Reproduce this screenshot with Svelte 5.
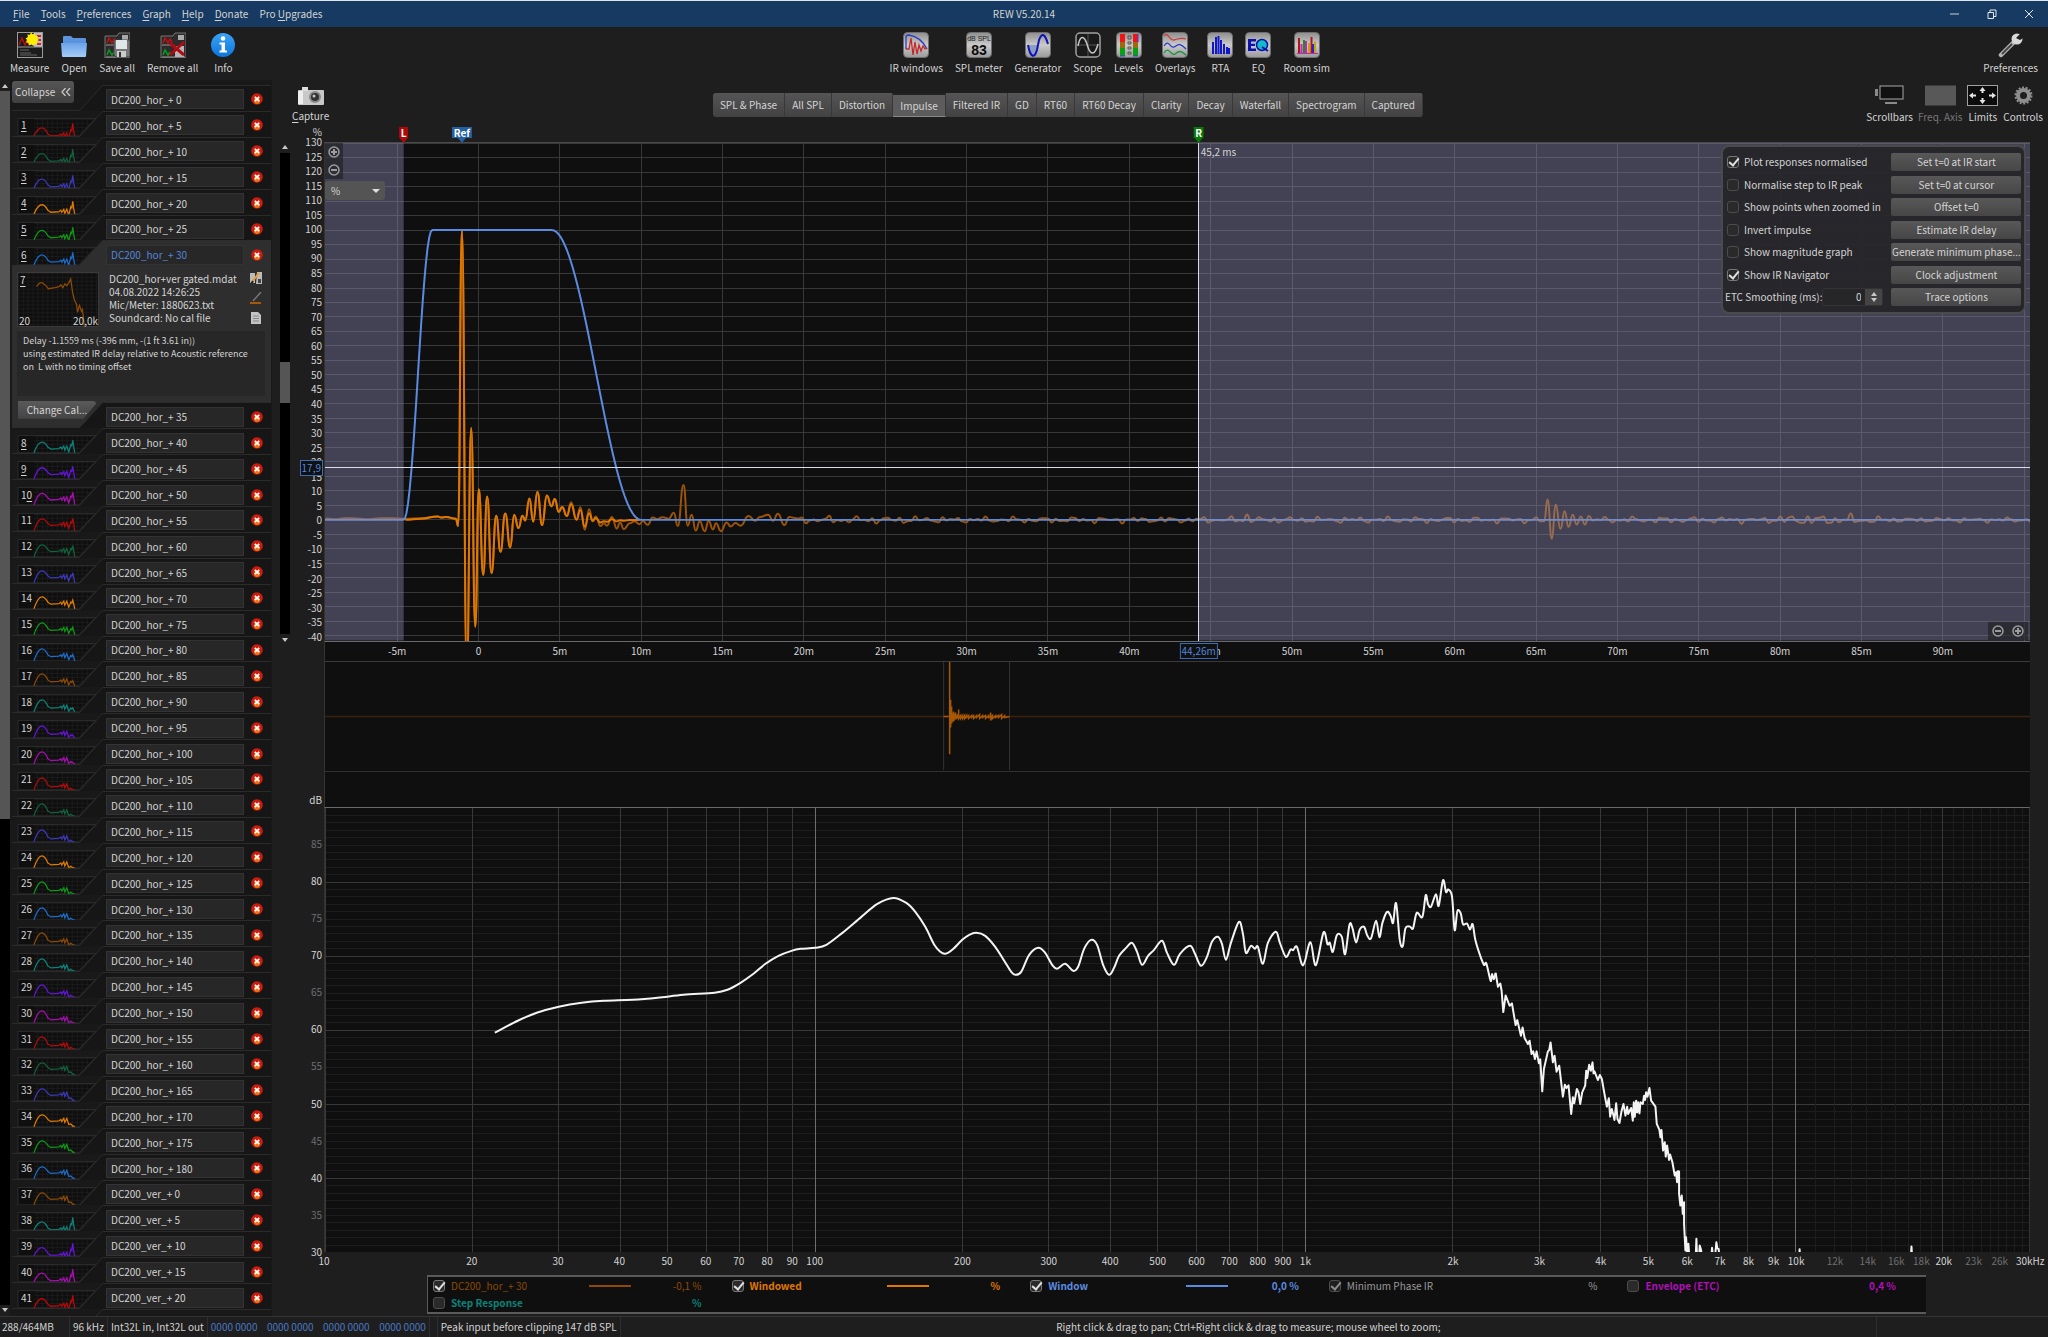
<script lang="ts">
  type Point = [number, number];

  const menus = [
    ['', 'F', 'ile'], ['', 'T', 'ools'], ['', 'P', 'references'], ['', 'G', 'raph'],
    ['', 'H', 'elp'], ['', 'D', 'onate'], ['Pro ', 'U', 'pgrades'],
  ];
  const fileTools = ['Measure', 'Open', 'Save all', 'Remove all', 'Info'];
  const viewTools = ['IR windows', 'SPL meter', 'Generator', 'Scope', 'Levels', 'Overlays', 'RTA', 'EQ', 'Room sim'];
  const graphTools = ['Scrollbars', 'Freq. Axis', 'Limits', 'Controls'];
  const tabs = [
    'SPL & Phase', 'All SPL', 'Distortion', 'Impulse', 'Filtered IR', 'GD', 'RT60',
    'RT60 Decay', 'Clarity', 'Decay', 'Waterfall', 'Spectrogram', 'Captured',
  ];
  let activeTab = $state('Impulse');

  // Measurement list
  const SELECTED = 6;
  const traceColors = ['#b40a0a', '#11623c', '#3c38ba', '#e07a00', '#0c9a14', '#1c6ccc', '#8c4a04', '#0c8278', '#6414dc', '#aa0cb4'];
  const measurements = Array.from({ length: 42 }, (_, i) =>
    i <= 36 ? `DC200_hor_+ ${i * 5}` : `DC200_ver_+ ${(i - 37) * 5}`
  );

  function thumbPath(n: number): string {
    const k = n >= 38 ? n - 38 : n - 1;
    const t = Math.min(k, 20) / 20;
    let mid = t < 0.5 ? 25 - 11 * t : 19.5 + 5 * (t - 0.5);
    if (k > 30) mid = 19.5;
    const peak = t < 0.5 ? 12.5 : 12.5 + (t - 0.5) * 24;
    const hump = 17 - 4 * Math.min(1, t * 2);
    const top = (peak + mid) / 2;
    return `M22 25 Q26 ${hump} 30 ${hump} Q33 ${hump} 36 ${mid - 2} L39 ${mid} L47 ${mid - 0.5} L49 ${mid - 2} L50 ${mid}
      L52 ${mid - 3} L53 ${mid + 1} L55 ${mid - 3} L57 ${mid + 3} L59 ${top} L60 ${top + 1} L61 ${peak} L62 ${top + 2} L63 25`;
  }

  // Impulse graph: 1706 x 499 units, 0 ms at 153.6
  const IR_W = 1706;
  const IR_H = 499;
  const msX = (ms: number) => 153.6 + 16.28 * ms;
  const pctY = (v: number) => 378 - 2.907 * v;

  const response: Point[] = [
    [-9.4, 0.5], [-8.8, 0.2], [-8.2, 0.6], [-7.5, 0.5], [-6.8, 0.2], [-6, 0.6], [-5.4, 0.6], [-4.5, 0.3],
    [-3.5, 0.6], [-2.5, 1.2], [-2.3, 0.8], [-2, 1], [-1.4, 0.4], [-1.25, -2.1], [-1.02, 100], [-0.72, -52], [-0.45, 31.7],
    [-0.2, -36.9], [0.02, 10.6], [0.29, -19], [0.53, 8.1], [0.8, -18.4], [1.09, 1.4], [1.35, -11], [1.64, 2.2],
    [1.95, -9.5], [2.19, 1.7], [2.46, -2.8], [2.7, 1.4], [2.87, -0.2], [3.13, 7.4], [3.36, -0.6], [3.62, 9.6],
    [3.91, -1.8], [4.2, 8.4], [4.48, 4.7], [4.69, 7.2], [4.93, 2.8], [5.14, 4.5], [5.43, 1.4], [5.69, 6.1],
    [6.02, 0.1], [6.26, 4.4], [6.53, -3.4], [6.8, 3.7], [7.02, -0.5], [7.2, 1.2], [7.5, -2.1], [7.7, -1.2], [7.9, -2],
    [8.2, 1], [8.5, -3], [8.7, -0.9], [8.93, -3.2], [9.3, -1.2], [9.6, -0.5], [9.9, -1.5], [10.1, -0.4], [10.4, -1.7],
    [10.7, 0.8], [11, 0.3], [11.3, 0.9], [11.7, 0.4], [12, 2.5], [12.25, -2.1], [12.6, 12], [12.86, -2], [13.1, 1.8],
    [13.35, -3.7], [13.6, -0.5], [13.9, -3.9], [14.15, -0.3], [14.4, -3.3], [14.6, -1.2], [14.9, -3.9], [15.25, -0.9],
    [15.5, -2.3], [15.8, -1.1], [16.1, -2], [16.6, 1.3], [17, -0.3], [17.3, 1], [17.8, 1.8], [18.1, -0.3],
    [18.4, 2.1], [18.8, -1.8], [19.1, 1],
  ];
  const reflection: Point[] = [
    [65.5, -0.5], [65.7, 7], [65.97, -6.5], [66.2, 5.3], [66.5, -3.1], [66.75, 3], [67, -2.4], [67.25, 1.8],
    [67.5, -1.6], [67.75, 1.2], [68, -1.6], [68.25, 1.3],
  ];
  const ripple = (t: number) => 0.5 * Math.sin(t * 7.1) + 0.45 * Math.sin(t * 11.7 + 1) + 0.4 * Math.sin(t * 3.3);

  function tail(from: number, to: number): Point[] {
    const out: Point[] = [];
    for (let t = from; t < to; t += 0.24) {
      const gain = t < 28 ? 1.2 : t > 80 && t < 86 ? 1.7 : t > 87 ? 0.8 : 1;
      out.push([t, ripple(t) * gain + (Math.abs(t - 47.2) < 0.15 ? 1.6 : 0)]);
    }
    return out;
  }
  const fullResponse = [...response, ...tail(19.4, 65.3), ...reflection, ...tail(68.5, 95.5)];

  function windowGain(t: number): number {
    if (t <= -4.6 || t >= 10) return 0;
    if (t < -2.85) return 0.5 - 0.5 * Math.cos((Math.PI * (t + 4.6)) / 1.75);
    if (t < 4.5) return 1;
    return 0.5 + 0.5 * Math.cos((Math.PI * (t - 4.5)) / 5.5);
  }

  // Joins the turning points with flat tangents
  function smooth(points: Point[]): string {
    return points
      .map(([t, v], i) => {
        const x = msX(t);
        const y = pctY(v);
        if (i === 0) return `M${x} ${y}`;
        const px = msX(points[i - 1][0]);
        const mx = (px + x) / 2;
        return `C${mx} ${pctY(points[i - 1][1])} ${mx} ${y} ${x} ${y}`;
      })
      .join('');
  }
  const responsePath = smooth(fullResponse);
  const windowedPath = smooth(
    response.filter(([t]) => t >= -4.6 && t <= 10).map(([t, v]): Point => [t, v * windowGain(t)])
  );
  const windowPath =
    'M' + Array.from({ length: 1049 }, (_, i) => -9.43 + i / 10).map((t) => `${msX(t)} ${pctY(100 * windowGain(t))}`).join('L');

  const msTicks = Array.from({ length: 21 }, (_, i) => -5 + i * 5);
  const pctTicks = Array.from({ length: 35 }, (_, i) => 130 - i * 5);

  // Spectrum graph: 1706 x 445 units, 10 Hz to 30 kHz, 90 dB to 30 dB
  const SP_W = 1706;
  const SP_H = 445;
  const hzX = (hz: number) => 490.7 * Math.log10(hz / 10);
  const dbY = (db: number) => (90 - db) * 7.417;

  const low: Point[] = [
    [170, 225], [193, 213], [212, 205], [234, 199], [257, 195], [279, 193], [308, 192], [333, 190], [359, 187],
    [390, 185], [403, 182], [416, 175], [429, 166], [441, 156], [454, 148], [467, 143], [476, 141], [491, 140], [502, 137],
    [518, 125], [537, 109], [553, 96], [569, 90], [582, 95], [591, 104], [601, 119], [610, 137], [616, 144], [621, 146],
    [628, 142], [638, 132], [645, 127], [652, 125], [661, 128], [671, 139], [680, 153], [687, 164], [691, 167], [697, 164],
    [705, 147], [714, 140], [721, 145], [728, 157], [733, 161], [741, 156], [749, 163], [754, 159], [760, 141], [767, 132],
    [773, 137], [779, 157], [785, 167], [790, 160], [795, 148], [802, 140], [808, 135], [813, 144], [818, 157], [824, 148],
    [830, 142], [838, 133], [843, 145], [850, 157], [856, 146], [866, 138], [871, 146], [877, 158], [883, 149], [888, 134],
    [894, 129], [898, 136], [902, 152], [907, 135], [915, 114], [919, 126], [922, 145], [927, 138], [931, 141], [934, 139],
    [939, 156], [944, 135], [952, 124], [956, 135],
  ];
  // Upper band, stored at three times the resolution
  const high: Point[] = [
    [18, 348], [32, 326], [40, 328], [51, 318], [66, 370], [75, 362], [92, 304], [108, 373], [131, 275], [143, 310],
    [150, 306], [159, 333], [171, 283], [186, 288], [196, 340], [209, 252], [218, 262], [229, 305], [240, 266], [253, 258],
    [263, 285], [274, 292], [289, 240], [299, 289], [308, 246], [322, 213], [333, 226], [340, 246], [349, 187], [360, 297],
    [369, 316], [377, 263], [390, 257], [400, 262], [411, 216], [428, 228], [438, 163], [445, 190], [454, 197], [469, 160],
    [477, 195], [490, 118], [499, 153], [506, 146], [517, 167], [525, 268], [533, 211], [543, 217], [550, 250], [562, 248],
    [571, 266], [579, 250], [587, 297], [600, 340], [613, 372], [620, 368], [633, 420], [637, 400], [643, 415], [648, 396],
    [655, 438], [662, 428], [666, 450], [671, 514], [678, 464], [690, 495], [697, 488], [708, 553], [713, 538], [724, 585],
    [729, 560], [735, 592], [745, 610], [750, 600], [756, 640], [761, 632], [766, 655], [771, 632], [778, 668], [782, 656],
    [788, 752], [793, 685], [805, 632], [809, 628], [813, 605], [820, 665], [825, 645], [831, 693], [839, 675], [850, 768],
    [856, 732], [861, 742], [867, 734], [875, 820], [880, 770], [884, 788], [892, 745], [897, 755], [902, 790], [908, 755],
    [917, 735], [920, 690], [923, 712], [929, 672], [934, 690], [939, 665], [942, 698], [945, 692], [955, 718], [961, 703],
    [967, 715], [975, 760], [982, 798], [988, 773], [992, 828], [997, 805], [1002, 825], [1005, 838], [1010, 788],
    [1014, 835], [1020, 847], [1026, 812], [1032, 790], [1038, 825], [1043, 798], [1046, 820], [1050, 812], [1055, 802],
    [1060, 840], [1063, 785], [1066, 828], [1070, 780], [1073, 815], [1076, 785], [1080, 818], [1083, 785], [1090, 790],
    [1094, 765], [1097, 778], [1100, 755], [1104, 768], [1110, 742], [1115, 780], [1128, 798], [1132, 850], [1140, 868],
    [1143, 890], [1146, 868], [1151, 930], [1156, 905], [1159, 948], [1163, 915], [1169, 958], [1172, 942], [1179, 965],
    [1186, 1005], [1190, 995], [1193, 1025], [1195, 992], [1199, 993], [1199, 1060], [1203, 1095], [1207, 1065], [1210, 1120],
    [1214, 1085], [1214, 1150], [1218, 1230], [1220, 1190], [1224, 1250], [1227, 1210], [1230, 1250], [1249, 1250],
    [1251, 1195], [1253, 1250], [1259, 1250], [1261, 1215], [1265, 1228], [1268, 1250], [1296, 1250], [1298, 1222],
    [1301, 1250], [1307, 1250], [1311, 1205], [1314, 1224], [1318, 1226], [1320, 1250], [1560, 1250], [1561, 1226],
    [1562, 1250], [1895, 1250], [1897, 1218], [1899, 1250],
  ];
  function bend(points: Point[]): string {
    let d = `M${points[0].join(' ')}`;
    for (let i = 0; i < points.length - 1; i++) {
      const p0 = points[Math.max(i - 1, 0)];
      const p1 = points[i];
      const p2 = points[i + 1];
      const p3 = points[Math.min(i + 2, points.length - 1)];
      d += `C${p1[0] + (p2[0] - p0[0]) / 6} ${p1[1] + (p2[1] - p0[1]) / 6} ${p2[0] - (p3[0] - p1[0]) / 6} ${p2[1] - (p3[1] - p1[1]) / 6} ${p2[0]} ${p2[1]}`;
    }
    return d;
  }
  const upper = high.map(([x, y]): Point => [956 + x / 3, 33 + y / 3]);
  const lowPath = bend([...low, ...upper.slice(0, 60)]);
  const highPath = 'M' + upper.slice(59).map((p) => p.join(' ')).join('L');

  const hzLines = [10, 100, 1000, 10000].flatMap((d) => Array.from({ length: 9 }, (_, i) => d * (i + 1))).filter((f) => f <= 30000);
  const hzFine = Array.from({ length: 19 }, (_, i) => 11000 + i * 1000);
  const hzTicks = [...hzLines.slice(0, 28), 12000, 14000, 16000, 18000, 20000, 23000, 26000, 30000];
  const dimHz = [12000, 14000, 16000, 18000, 23000, 26000];
  const hzLabel = (f: number) => (f === 30000 ? '30kHz' : f >= 1000 ? `${f / 1000}k` : `${f}`);
  const dbLines = Array.from({ length: 60 }, (_, i) => 30 + i);
  const dbTicks = [85, 80, 75, 70, 65, 60, 55, 50, 45, 40, 35, 30];

  let options = $state([
    { label: 'Plot responses normalised', on: true, action: 'Set t=0 at IR start' },
    { label: 'Normalise step to IR peak', on: false, action: 'Set t=0 at cursor' },
    { label: 'Show points when zoomed in', on: false, action: 'Offset t=0' },
    { label: 'Invert impulse', on: false, action: 'Estimate IR delay' },
    { label: 'Show magnitude graph', on: false, action: 'Generate minimum phase...' },
    { label: 'Show IR Navigator', on: true, action: 'Clock adjustment' },
  ]);
  let smoothing = $state('0');

  let legend = $state([
    { name: 'DC200_hor_+ 30', color: '#8c4a04', on: true, line: true, value: '-0,1 %', bold: false },
    { name: 'Windowed', color: '#e07800', on: true, line: true, value: '%', bold: true },
    { name: 'Window', color: '#5b8be0', on: true, line: true, value: '0,0 %', bold: true },
    { name: 'Minimum Phase IR', color: '#9a9a9a', on: true, line: false, value: '%', bold: false },
    { name: 'Envelope (ETC)', color: '#b010b8', on: false, line: false, value: '0,4 %', bold: true },
    { name: 'Step Response', color: '#0c8278', on: false, line: false, value: '%', bold: true },
  ]);
</script>

{#snippet plate()}
  <rect x="0.5" y="0.5" width="25" height="25" rx="4" fill="url(#plate)" stroke="#6e6e6e" />
{/snippet}

{#snippet folderBase()}
  <path d="M1 4H13L15 1H26V26H1Z" fill="#2b2b2b" stroke="#777" />
  <path d="M2 13H14M2 25H25" stroke="#999" />
  <path d="M3 11L5 6L8 11L10 7L12 10" fill="none" stroke="#c01010" stroke-width="1.5" />
  <path d="M3 23L5 18L8 23L10 20" fill="none" stroke="#0a9a20" stroke-width="1.5" />
  <rect x="18" y="3" width="6" height="5" fill="#aaa" />
{/snippet}

{#snippet toolIcon(name: string)}
  <svg class="tool-icon" viewBox="0 0 26 26" aria-hidden="true">
    {#if name === 'Measure'}
      <rect x="0.5" y="0.5" width="25" height="25" fill="#1c1c1c" stroke="#9a9a9a" />
      <rect x="17" y="1" width="8" height="14" fill="#bdbdbd" />
      <path d="M20 4H24M20 8H24M20 12H24" stroke="#c22" stroke-width="2" />
      <path d="M1 15H25" stroke="#999" />
      <path d="M2 13L5 6L8 13L10 8L12 13" fill="none" stroke="#c01010" stroke-width="1.3" />
      <path d="M3 18H12M3 21H14M3 23H20" stroke="#666" />
      <path d="M14 0l1.500 2.200 2.500-.9.400 2.600 2.600.4-.9 2.300 1.900 1.400-2.300 1.600.6 2.400-2.600-.1-1.200 2-2-1.500-2.600 1-.4-2.500-2.600-.6 1.300-2.300-1.600-1.600 2.300-1.500-.5-2.300 2.600.1z" fill="#ffee00" />
    {:else if name === 'Open'}
      <path d="M2 5Q2 4 3 4H10L12 6H24Q25 6 25 7V14H2Z" fill="#5b93dc" />
      <path d="M0 11H26L25 24Q25 25 24 25H2Q1 25 1 24Z" fill="url(#folder)" />
    {:else if name === 'Save all'}
      {@render folderBase()}
      <path d="M10 8H26V25H12L10 23Z" fill="#777" stroke="#444" />
      <rect x="12" y="8" width="11" height="9" fill="#dfe6ea" />
      <rect x="13" y="19" width="9" height="6" fill="#ccc" />
      <rect x="15" y="20" width="2" height="5" fill="#333" />
    {:else if name === 'Remove all'}
      {@render folderBase()}
      <rect x="15" y="14" width="9" height="11" fill="#b5b5b5" />
      <path d="M10 11L24 23M24 10L10 23" stroke="#b00c14" stroke-width="3" />
    {:else if name === 'Info'}
      <circle cx="13" cy="13" r="12" fill="url(#info)" />
      <circle cx="13" cy="6.500" r="2.300" fill="#fff" />
      <path d="M9.500 10.500H15V18.500H17V20.500H9.500V18.500H11.500V12.500H9.500Z" fill="#fff" />
    {:else if name === 'IR windows'}
      {@render plate()}
      <path d="M3 17V5Q3 3 6 3Q18 5 24 17" fill="none" stroke="#2a3cc8" stroke-width="1.300" />
      <path d="M3 17H6L8 6L10 23L12 10L14 22L16 13L18 19L20 14L22 17L24 16" fill="none" stroke="#c42828" stroke-width="1.300" />
    {:else if name === 'SPL meter'}
      {@render plate()}
      <text x="13" y="9" text-anchor="middle" class="meter-unit">dB SPL</text>
      <text x="13" y="23" text-anchor="middle" class="meter-value">83</text>
    {:else if name === 'Generator'}
      {@render plate()}
      <path d="M3 13H13L12 18Q9 26 6 22Z" fill="#8e9cc4" />
      <path d="M3 13C5 24 9 28 12 18L14 8C17 0 20 2 23 12" fill="none" stroke="#0c14b4" stroke-width="2" />
    {:else if name === 'Scope'}
      <rect x="1" y="1" width="24" height="24" rx="4" fill="#1a1a1a" stroke="#a0a0a0" stroke-width="1.500" />
      <path d="M13 2V24M2 13H24" stroke="#555" />
      <path d="M3 14C5 3 9 3 12 12C15 24 20 24 23 12" fill="none" stroke="#c8c8c8" stroke-width="1.500" />
    {:else if name === 'Levels'}
      {@render plate()}
      <rect x="4" y="2" width="5" height="8" fill="#f01414" />
      <rect x="4" y="10" width="5" height="6" fill="#9a6a10" />
      <rect x="4" y="16" width="5" height="8" fill="#0aa014" />
      <rect x="17" y="2" width="5" height="8" fill="#f01414" />
      <rect x="17" y="10" width="5" height="6" fill="#9a6a10" />
      <rect x="17" y="16" width="5" height="8" fill="#0aa014" />
      <path d="M4 24H9M17 24H22M22 2V10" stroke="#3a3af0" />
      <path d="M12 4H15V7H12ZM12 10H15V12H12ZM12 15H15V17H12ZM12 20H15V22H12Z" fill="none" stroke="#555" />
    {:else if name === 'Overlays'}
      {@render plate()}
      <path d="M2 4C6 -1 7 9 12 8S18 5 24 7" fill="none" stroke="#d03838" stroke-width="1.300" />
      <path d="M2 14C7 6 8 17 12 15S17 10 24 17" fill="none" stroke="#2838c8" stroke-width="1.300" />
      <path d="M2 21C7 13 9 25 13 22S18 18 24 23" fill="none" stroke="#18963c" stroke-width="1.300" />
    {:else if name === 'RTA'}
      {@render plate()}
      <path d="M6 22V10M9 22V5M11.500 22V4M14 22V8M17 22V12M20 22V15M22 22V16" stroke="#1018c8" stroke-width="2" />
    {:else if name === 'EQ'}
      {@render plate()}
      <path d="M3 7H11V9.500H6V11.800H10V14H6V16.500H11V19H3Z" fill="#0c10b0" />
      <circle cx="17" cy="13" r="5.500" fill="#12bcc4" stroke="#0c10b0" stroke-width="1.500" />
      <path d="M17 15L23 19" stroke="#0c10b0" stroke-width="2" />
    {:else if name === 'Room sim'}
      {@render plate()}
      <path d="M5 21V6" stroke="#b41414" stroke-width="2" />
      <path d="M7.500 21V12M12 21V9" stroke="#c028b0" stroke-width="2" />
      <path d="M10 21V8" stroke="#1c8c28" stroke-width="2" />
      <path d="M15 21V11M21 21V10" stroke="#c8a014" stroke-width="2" />
      <path d="M17.500 21V5" stroke="#b41414" stroke-width="2" />
      <path d="M19 21V12" stroke="#2828c8" stroke-width="2" />
      <path d="M3 21.500H24" stroke="#c028b0" />
    {:else if name === 'Preferences'}
      <path d="M3 23L16 10" stroke="#b4b4b4" stroke-width="4.500" stroke-linecap="round" />
      <path d="M4 22L14 12" stroke="#444" stroke-width="2" />
      <circle cx="19" cy="7" r="5.500" fill="#d8d8d8" />
      <path d="M18 6L25 -1L27 5L22 8Z" fill="#1e1e1e" />
    {/if}
  </svg>
{/snippet}

{#snippet tool(name: string)}
  <button class="tool">
    {@render toolIcon(name)}
    <span>{name}</span>
  </button>
{/snippet}

{#snippet zoomButton(sign: string)}
  <button class="zoom" aria-label={sign === '+' ? 'Zoom in' : 'Zoom out'}>
    <svg viewBox="0 0 12 12" aria-hidden="true">
      <circle cx="6" cy="6" r="5" fill="none" stroke="#9c9c9c" stroke-width="1.500" />
      <path d={sign === '+' ? 'M3 6H9M6 3V9' : 'M3 6H9'} stroke="#9c9c9c" stroke-width="2" />
    </svg>
  </button>
{/snippet}

<svg class="defs" aria-hidden="true">
  <defs>
    <linearGradient id="plate" x2="0" y2="1">
      <stop offset="0" stop-color="#8e8e8e" />
      <stop offset="0.5" stop-color="#cacaca" />
      <stop offset="1" stop-color="#9a9a9a" />
    </linearGradient>
    <linearGradient id="folder" x2="0" y2="1">
      <stop offset="0" stop-color="#6aa2e8" />
      <stop offset="1" stop-color="#a6ccf8" />
    </linearGradient>
    <linearGradient id="info" x2="0" y2="1">
      <stop offset="0" stop-color="#3aa4f4" />
      <stop offset="1" stop-color="#0c74dc" />
    </linearGradient>
    <pattern id="mesh" width="5" height="4" patternUnits="userSpaceOnUse">
      <path d="M0 0H5M0 0V4" stroke="#222" />
    </pattern>
  </defs>
</svg>

<div class="window">
  <header class="titlebar">
    <nav>
      {#each menus as [before, key, after]}
        <button class="menu">{before}<u>{key}</u>{after}</button>
      {/each}
    </nav>
    <h1>REW V5.20.14</h1>
    <div class="window-buttons">
      <button aria-label="Minimise"><svg viewBox="0 0 10 10"><path d="M0 5H9" stroke="#c8d0d8" /></svg></button>
      <button aria-label="Restore">
        <svg viewBox="0 0 10 10"><path d="M1 3.500H6.500V9.500H1ZM3 3V1H9V7.500H7" fill="none" stroke="#e4e8ec" /></svg>
      </button>
      <button aria-label="Close"><svg viewBox="0 0 10 10"><path d="M1 1L9 9M9 1L1 9" stroke="#e4e8ec" /></svg></button>
    </div>
  </header>

  <div class="toolbar">
    <div class="tools">{#each fileTools as name}{@render tool(name)}{/each}</div>
    <div class="tools">{#each viewTools as name}{@render tool(name)}{/each}</div>
    <div class="tools">{@render tool('Preferences')}</div>
  </div>

  <div class="body">
    <div class="scrollbar outer">
      <span class="arrow up"></span>
      <div class="track"><div class="thumb"></div></div>
      <span class="arrow down"></span>
    </div>

    <aside class="list">
      {#each measurements as name, i}
        <div class="row" class:selected={i === SELECTED} class:after={i === SELECTED + 1}>
          <svg class="row-shape" viewBox="0 0 260 26" preserveAspectRatio="none" aria-hidden="true">
            {#if i > 0 && i !== SELECTED + 1}
              <path d="M6 25V7.500H84L67 25Z" fill="#0f0f0f" stroke="#2c2c2c" />
              <path d="M22 25V8H82L67 25Z" fill="url(#mesh)" />
              <path d={thumbPath(i)} fill="none" stroke={traceColors[(i - 1) % 10]} stroke-width="1.300" />
            {/if}
            <path class="tab" d="M0 25.500H68L91 0.500H260V26H0Z" />
            <path class="tab-edge" d="M0 25.500H68L91 0.500H260" />
          </svg>
          {#if i === 0}
            <button class="collapse">Collapse
              <svg viewBox="0 0 10 8" aria-hidden="true"><path d="M4.500 0L1 4L4.500 8M9 0L5.500 4L9 8" fill="none" stroke="#c8c8c8" stroke-width="1.300" /></svg>
            </button>
          {:else if i === SELECTED + 1}
            <button class="change-cal">Change Cal...</button>
          {:else}
            <span class="number">{#if i < 10}<u>{i}</u>{:else if i === 10}1<u>0</u>{:else}{i}{/if}</span>
          {/if}
          <input class="name" type="text" value={name} aria-label="Measurement name" />
          <button class="remove" aria-label="Remove measurement">
            <svg viewBox="0 0 12 12">
              <circle cx="6" cy="6" r="5.800" fill="#cc1c10" />
              <circle cx="6" cy="8" r="3" fill="#e87818" />
              <path d="M3.800 3.800L8.200 8.200M8.200 3.800L3.800 8.200" stroke="#fff" stroke-width="1.700" />
            </svg>
          </button>
        </div>
        {#if i === SELECTED}
          <section class="detail">
            <div class="preview">
              <svg viewBox="0 0 82 54" preserveAspectRatio="none" aria-hidden="true">
                <rect width="82" height="54" fill="url(#mesh)" />
                <path d="M19 14Q22 9 25 10Q28 12 31 16L38 15L42 14L44 12L46 15L48 11L50 13L52 10L54 6L56 20L58 28L60 32L61 40L63 33L65 39L66 37L67 45L68 54" fill="none" stroke="#8c4a04" stroke-width="1.300" />
              </svg>
              <span class="number"><u>7</u></span>
              <span class="from">20</span>
              <span class="to">20,0k</span>
            </div>
            <div class="facts">
              <p>DC200_hor+ver gated.mdat</p>
              <p>04.08.2022 14:26:25</p>
              <p>Mic/Meter: 1880623.txt</p>
              <p>Soundcard: No cal file</p>
            </div>
            <div class="fact-icons">
              <svg viewBox="0 0 12 12"><path d="M0 1H5V11H0ZM7 0H12V12H6Z" fill="#bbb" /><path d="M2 10L9 1" stroke="#e8a030" stroke-width="2" /><path d="M1 12L3 9" stroke="#222" stroke-width="2" /><rect x="8" y="7" width="3" height="4" fill="#444" /></svg>
              <svg viewBox="0 0 12 12"><path d="M0 11H11" stroke="#a8580c" stroke-width="2" /><path d="M3 9L11 0" stroke="#777" stroke-width="1.500" /></svg>
              <svg viewBox="0 0 12 12"><path d="M1 0H8L11 3V12H1Z" fill="#c4c4c4" /><path d="M3 4H9M3 6.500H9M3 9H9" stroke="#888" /></svg>
            </div>
            <textarea class="notes" aria-label="Notes" value={'Delay -1.1559 ms (-396 mm, -(1 ft 3.61 in))\nusing estimated IR delay relative to Acoustic reference\non  L with no timing offset'}></textarea>
          </section>
        {/if}
      {/each}
      <div class="tail">
        <svg viewBox="0 0 260 8" preserveAspectRatio="none"><path d="M6 8V7.500H84L91 0.500H260" fill="none" stroke="#2c2c2c" /></svg>
      </div>
    </aside>

    <main>
      <div class="graph-head">
        <button class="capture">
          <svg viewBox="0 0 26 18" aria-hidden="true">
            <rect y="3" width="26" height="15" rx="1" fill="#c8c8c8" />
            <rect y="4" width="5" height="13" fill="#eee" />
            <rect x="4" width="6" height="4" fill="#ddd" />
            <circle cx="17" cy="10" r="6" fill="#8a8a8a" />
            <circle cx="17" cy="10" r="4" fill="#333" />
            <circle cx="16" cy="9" r="1.500" fill="#bcc" />
          </svg>
          <span><u>C</u>apture</span>
        </button>
        <div class="tabs" role="tablist">
          {#each tabs as tab}
            <button role="tab" aria-selected={tab === activeTab} class:active={tab === activeTab} onclick={() => (activeTab = tab)}>{tab}</button>
          {/each}
        </div>
        <div class="graph-tools">
          {#each graphTools as name}
            <button class:off={name === 'Freq. Axis'}>
              <svg viewBox="0 0 31 21" aria-hidden="true">
                {#if name === 'Scrollbars'}
                  <rect x="6" y="1" width="23" height="13" fill="#111" stroke="#a8a8a8" />
                  <rect x="1" y="4" width="3" height="7" fill="#8a8a8a" />
                  <rect x="11" y="17" width="12" height="2" fill="#8a8a8a" />
                {:else if name === 'Freq. Axis'}
                  <rect y="0.500" width="31" height="20" fill="#585858" />
                {:else if name === 'Limits'}
                  <rect x="0.500" y="0.500" width="30" height="20" fill="#0c0c0c" stroke="#a0a0a0" />
                  <path d="M15.500 8V4M15.500 13V17M9 10.500H4M22 10.500H27" stroke="#e4e4e4" stroke-width="2" />
                  <path d="M12.500 6L15.500 2L18.500 6ZM12.500 15L15.500 19L18.500 15ZM6 7.500L2 10.500L6 13.500ZM25 7.500L29 10.500L25 13.500Z" fill="#e4e4e4" />
                {:else}
                  <circle cx="15.500" cy="10.500" r="8" fill="none" stroke="#8e8e8e" stroke-width="2" stroke-dasharray="2 1.600" />
                  <circle cx="15.500" cy="10.500" r="5.500" fill="none" stroke="#8e8e8e" stroke-width="4" />
                {/if}
              </svg>
              <span>{name}</span>
            </button>
          {/each}
        </div>
      </div>

      <div class="graphs">
        <div class="scrollbar inner">
          <span class="arrow up"></span>
          <div class="track"><div class="thumb"></div></div>
          <span class="arrow down"></span>
        </div>

        <div class="y-axis ir-y">
          <span class="unit">%</span>
          {#each pctTicks as v}
            <span class="tick" style="top: {(pctY(v) / IR_H) * 100}%">{v}</span>
          {/each}
          <span class="cursor-y" style="top: {(pctY(17.9) / IR_H) * 100}%">17,9</span>
        </div>
        <div class="plot ir">
          <svg viewBox="0 0 {IR_W} {IR_H}" preserveAspectRatio="none" aria-hidden="true">
            <g class="grid">
              {#each pctTicks as v}<path d="M0 {pctY(v)}H{IR_W}" />{/each}
              {#each msTicks as t}<path d="M{msX(t)} 0V{IR_H}" />{/each}
            </g>
            <path d={responsePath} class="response" />
            <path d={windowedPath} class="windowed" />
            <path d={windowPath} class="window-line" />
            <rect width={msX(-4.6)} height={IR_H} class="shade" />
            <rect x={msX(44.26)} width={IR_W - msX(44.26)} height={IR_H} class="shade" />
            <path d="M0 {pctY(17.9)}H{IR_W}M{msX(44.26)} 0V{IR_H}" class="cursor" />
          </svg>
          <span class="marker left" style="left: {(msX(-4.6) / IR_W) * 100}%">L</span>
          <span class="marker ref" style="left: {(msX(-1.02) / IR_W) * 100}%">Ref</span>
          <span class="marker right" style="left: {(msX(44.26) / IR_W) * 100}%">R</span>
          <span class="cursor-time" style="left: {(msX(44.26) / IR_W) * 100}%">45,2 ms</span>
          <div class="y-zoom">{@render zoomButton('+')}{@render zoomButton('-')}</div>
          <div class="units">
            <select aria-label="Y axis units"><option>%</option><option>dBFS</option></select>
          </div>
          <div class="x-zoom">{@render zoomButton('-')}{@render zoomButton('+')}</div>

          <div class="options">
            {#each options as option}
              <label><input type="checkbox" bind:checked={option.on} />{option.label}</label>
              <button>{option.action}</button>
            {/each}
            <div class="etc">
              <label for="etc">ETC Smoothing (ms):</label>
              <div class="spinner">
                <input id="etc" type="text" bind:value={smoothing} />
                <div class="steps"><span class="arrow up"></span><span class="arrow down"></span></div>
              </div>
            </div>
            <button>Trace options</button>
          </div>
        </div>

        <div class="x-axis ir-x">
          {#each msTicks.slice(0, 20) as t}
            <span class="tick" style="left: {(msX(t) / IR_W) * 100}%">{t === 0 ? '0' : `${t}m`}</span>
          {/each}
          <span class="cursor-x" style="left: {(msX(44.26) / IR_W) * 100}%">44,26m</span>
        </div>

        <div class="navigator">
          <svg viewBox="0 0 1706 110" preserveAspectRatio="none" aria-hidden="true">
            <path d="M0 55H1706" stroke="#3c220c" stroke-width="1.500" />
            <path d="M619 0V109M685 0V109" stroke="#333" />
            <path d="M619 55H624M625 0V93M626 38V66M627 45V62L629 50V60L631 51V58L633 53V57L634 55V48V57L636 54V57L638 54V57L640 54V57L642 54V56L644 54V57L647 54V56L649 54V57L652 54V56L655 53V57L658 54V56L661 54V57L664 54V56L666 55V51V59L668 53V57L671 54V56L674 54V56L677 53V57L680 54V56L685 55" fill="none" stroke="#a85804" stroke-width="1.500" />
          </svg>
        </div>

        <div class="gap"></div>

        <div class="y-axis sp-y">
          <span class="unit">dB</span>
          {#each dbTicks as v}
            <span class="tick" class:dim={v % 10 !== 0} style="top: {(dbY(v) / SP_H) * 100}%">{v}</span>
          {/each}
        </div>
        <div class="plot sp">
          <svg viewBox="0 0 {SP_W} {SP_H}" preserveAspectRatio="none" aria-hidden="true">
            <g class="grid">
              {#each dbLines as v}<path d="M0 {dbY(v)}H{SP_W}" class:fine={v % 10 !== 0} />{/each}
              {#each hzFine as f}<path d="M{hzX(f)} 0V{SP_H}" class="fine" />{/each}
              {#each hzLines as f}<path d="M{hzX(f)} 0V{SP_H}" class:decade={f === 100 || f === 1000 || f === 10000} />{/each}
            </g>
            <path d={lowPath} class="spectrum" />
            <path d={highPath} class="spectrum" />
          </svg>
        </div>
        <div class="x-axis sp-x">
          {#each hzTicks as f}
            <span class="tick" class:dim={dimHz.includes(f)} style="left: {(hzX(f) / SP_W) * 100}%">{hzLabel(f)}</span>
          {/each}
        </div>
      </div>

      <div class="legend">
        {#each legend as item}
          <label class:bold={item.bold} style="color: {item.color}">
            <input type="checkbox" bind:checked={item.on} disabled={item.name === 'Minimum Phase IR'} />
            <span class="legend-name">{item.name}</span>
            <span class="swatch" class:blank={!item.line}></span>
            <span class="value">{item.value}</span>
          </label>
        {/each}
      </div>
    </main>
  </div>

  <footer class="status">
    <span class="memory">288/464MB</span>
    <span>96 kHz</span>
    <span>Int32L in, Int32L out</span>
    <span class="bits"><i>0000 0000</i><i>0000 0000</i><i>0000 0000</i><i>0000 0000</i></span>
    <span class="peak">Peak input before clipping 147 dB SPL</span>
    <span class="hint">Right click &amp; drag to pan; Ctrl+Right click &amp; drag to measure; mouse wheel to zoom;</span>
    <span class="rest"></span>
  </footer>
</div>

<style>
  :global(body) {
    background: #1e1e1e;
  }

  .window {
    display: flex;
    flex-direction: column;
    height: 100vh;
    overflow: hidden;
    background: #1e1e1e;
    color: #d4d4d4;
    font: 10px/14px 'Noto Sans CJK SC', Lato, sans-serif;
  }

  .defs {
    position: absolute;
    width: 0;
    height: 0;
  }

  * {
    box-sizing: border-box;
  }

  button,
  input,
  select,
  textarea {
    margin: 0;
    padding: 0;
    border: 0;
    background: none;
    color: inherit;
    font: inherit;
  }

  p {
    margin: 0;
  }

  u {
    text-underline-offset: 2px;
  }

  /* Title bar */
  .titlebar {
    display: grid;
    grid-template-columns: 1fr auto 1fr;
    align-items: center;
    flex: none;
    height: 27px;
    border-top: 1px solid #dfe6ea;
    background: #163a61;
  }

  nav {
    display: flex;
    gap: 11px;
    padding-left: 13px;
  }

  h1 {
    margin: 0;
    font: inherit;
  }

  .window-buttons {
    display: flex;
    justify-content: flex-end;
    gap: 27px;
    padding-right: 14px;
  }

  .window-buttons svg {
    display: block;
    width: 10px;
    height: 10px;
  }

  /* Toolbar */
  .toolbar {
    display: flex;
    justify-content: space-between;
    flex: none;
    height: 53px;
    padding: 5px 10px 0;
  }

  .tools {
    display: flex;
    gap: 12px;
  }

  .tool {
    display: flex;
    flex-direction: column;
    align-items: center;
    gap: 3px;
  }

  .tool-icon {
    width: 26px;
    height: 26px;
    overflow: hidden;
  }

  .meter-unit {
    font: 7px 'Liberation Sans', sans-serif;
    fill: #222;
  }

  .meter-value {
    font: bold 14px 'Liberation Sans', sans-serif;
    fill: #0c0c0c;
  }

  .body {
    display: flex;
    flex: 1;
    min-height: 0;
  }

  /* Scroll bars */
  .scrollbar {
    display: flex;
    flex-direction: column;
    align-items: center;
    width: 10px;
  }

  .track {
    flex: 1;
    align-self: stretch;
    background: #000;
  }

  .thumb {
    background: #555;
  }

  .outer {
    flex: none;
    padding: 4px 0;
    gap: 3px;
  }

  .outer .thumb {
    height: 60%;
  }

  .arrow {
    border: 3px solid transparent;
  }

  .arrow.up {
    border-top: 0;
    border-bottom: 4px solid #c8c8c8;
  }

  .arrow.down {
    border-bottom: 0;
    border-top: 4px solid #c8c8c8;
  }

  /* Measurement list */
  .list {
    display: flex;
    flex-direction: column;
    flex: none;
    width: 262px;
    padding: 5px 0 0 2px;
    border-right: 1px solid #191919;
    background: #191919;
  }

  .row {
    position: relative;
    display: flex;
    align-items: center;
    flex: 1 1 0;
    min-height: 0;
    padding-top: 3px;
  }

  .row-shape {
    position: absolute;
    inset: 0;
    width: 100%;
    height: 100%;
  }

  .tab {
    fill: #161616;
    clip-path: polygon(26% 100%, 35% 0, 100% 0, 100% 100%);
  }

  .tab-edge {
    fill: none;
    stroke: #2c2c2c;
  }

  .selected .tab {
    fill: #2e2e2e;
  }

  .selected .tab-edge {
    stroke: #2e2e2e;
  }

  .row.after {
    background: linear-gradient(90deg, #2e2e2e 35%, #161616 35%);
  }

  .number,
  .name,
  .remove,
  .collapse,
  .change-cal {
    position: relative;
  }

  .row .number {
    width: 84px;
    padding-left: 9px;
  }

  .collapse {
    display: flex;
    align-items: center;
    gap: 6px;
    width: 62px;
    height: 22px;
    margin: -14px 22px 0 0;
    padding-left: 3px;
    border-radius: 3px;
    background: linear-gradient(#565656, #404040);
  }

  .collapse svg {
    width: 10px;
    height: 8px;
    flex: none;
  }

  .change-cal {
    width: 84px;
    height: 18px;
    margin: -14px 0 0 0;
    padding-left: 6px;
    border-radius: 3px;
    background: linear-gradient(#5a5a5a, #444);
    clip-path: polygon(6px 0, 100% 0, 100% 3px, 85% 100%, 6px 100%);
  }

  .name {
    width: 138px;
    height: 20px;
    margin-left: 10px;
    padding: 0 4px;
    border: 1px solid #333;
    background: #272727;
  }

  .row .name,
  .row .remove {
    flex: none;
  }

  .selected .name {
    color: #5286dc;
  }

  .remove {
    width: 12px;
    height: 12px;
    margin-left: 7px;
  }

  .remove svg {
    display: block;
  }

  .detail {
    display: grid;
    grid-template-columns: 82px 1fr 12px;
    grid-template-rows: 55px 65px;
    gap: 4px 10px;
    flex: none;
    height: 136px;
    padding: 6px 6px 0 5px;
    background: #2e2e2e;
  }

  .preview {
    position: relative;
    border: 1px solid #3a3a3a;
    background: #0f0f0f;
  }

  .preview svg {
    position: absolute;
    width: 100%;
    height: 100%;
  }

  .preview .number {
    padding-left: 2px;
  }

  .from,
  .to {
    position: absolute;
    bottom: -2px;
  }

  .from {
    left: 1px;
  }

  .to {
    right: 0;
  }

  .facts {
    line-height: 13px;
    white-space: nowrap;
  }

  .fact-icons {
    display: flex;
    flex-direction: column;
    gap: 8px;
    margin-left: -3px;
  }

  .fact-icons svg {
    width: 12px;
    height: 12px;
  }

  .notes {
    grid-column: 1 / -1;
    padding: 3px 6px;
    background: #272727;
    font-size: 9px;
    line-height: 13px;
    white-space: pre;
    overflow: hidden;
    resize: none;
  }

  .tail {
    flex: none;
    height: 7px;
  }

  .tail svg {
    display: block;
    width: 100%;
    height: 8px;
  }

  /* Graph area */
  main {
    display: flex;
    flex-direction: column;
    flex: 1;
    min-width: 0;
    padding-left: 8px;
  }

  .graph-head {
    display: grid;
    grid-template-columns: 437fr auto 631fr;
    flex: none;
    height: 62px;
  }

  .capture,
  .graph-tools button {
    display: flex;
    flex-direction: column;
    align-items: center;
    gap: 4px;
  }

  .capture {
    justify-self: start;
    padding: 7px 0 0 12px;
  }

  .capture svg {
    width: 26px;
    height: 18px;
  }

  .tabs {
    display: flex;
    align-self: start;
    height: 24px;
    margin-top: 13px;
    border-radius: 3px;
    overflow: hidden;
  }

  .tabs button {
    padding: 0 7px;
    border-right: 1px solid #383838;
    background: linear-gradient(#555, #424242);
  }

  .tabs .active {
    border-top: 2px solid #222;
    border-bottom: 1px solid #888;
    background: #5c5c5c;
  }

  .graph-tools {
    display: flex;
    justify-content: flex-end;
    gap: 5px;
    padding: 5px 5px 0 0;
  }

  .graph-tools svg {
    width: 31px;
    height: 21px;
  }

  .graph-tools .off {
    color: #777;
  }

  .graphs {
    display: grid;
    grid-template-columns: 10px 34px 1fr;
    grid-template-rows: minmax(0, 499fr) 20px 110px 35px minmax(0, 445fr) 20px;
    flex: 1;
    min-height: 0;
    margin-right: 18px;
  }

  .inner {
    grid-area: 1 / 1;
    gap: 4px;
    padding: 3px 0 0;
  }

  .inner .track {
    padding-top: 209px;
  }

  .inner .thumb {
    height: 41px;
  }

  .y-axis {
    position: relative;
    grid-column: 2;
  }

  .ir-y {
    grid-row: 1;
  }

  .sp-y {
    grid-row: 5;
  }

  .tick,
  .cursor-x,
  .cursor-y,
  .marker,
  .cursor-time,
  .unit {
    position: absolute;
    white-space: nowrap;
  }

  .y-axis .tick {
    right: 2px;
    transform: translateY(-50%);
  }

  .unit {
    top: -17px;
    right: 2px;
  }

  .sp-y .unit {
    top: -14px;
  }

  .dim {
    color: #6e6e6e;
  }

  .cursor-y,
  .cursor-x {
    border: 1px solid #3c6cb4;
    background: #101010;
    color: #5286dc;
  }

  .cursor-y {
    right: 1px;
    padding: 0 1px;
    transform: translateY(-50%);
  }

  .cursor-x {
    top: 1px;
    padding: 0 1px;
    transform: translateX(-50%);
  }

  .plot {
    position: relative;
    grid-column: 3;
    border-left: 1px solid #333;
    border-top: 1px solid #4a4a4a;
    background: #0f0f0f;
  }

  .plot > svg,
  .navigator svg {
    display: block;
    position: absolute;
    width: 100%;
    height: 100%;
  }

  .ir {
    grid-row: 1;
    border-bottom: 1px solid #6a6a6a;
  }

  .sp {
    grid-row: 5;
    border-top-color: #6a6a6a;
    border-right: 1px solid #333;
  }

  .grid path {
    fill: none;
    stroke: #383838;
    shape-rendering: crispEdges;
  }

  .grid .fine {
    stroke: #1d1d1d;
  }

  .grid .decade {
    stroke: #6e6e6e;
  }

  .response,
  .windowed,
  .window-line,
  .spectrum {
    fill: none;
    stroke-width: 2px;
    stroke-linejoin: round;
  }

  .response {
    stroke: #9c5408;
  }

  .windowed {
    stroke: #e07800;
  }

  .window-line {
    stroke: #5b8be0;
  }

  .spectrum {
    stroke: #f4f4f4;
  }

  .shade {
    fill: rgb(142 142 187 / 40%);
  }

  .cursor {
    stroke: #dcdce4;
    shape-rendering: crispEdges;
  }

  .marker {
    bottom: 100%;
    padding: 0 2px 4px;
    clip-path: polygon(0 0, 100% 0, 100% 11px, calc(50% + 4px) 11px, 50% 100%, calc(50% - 4px) 11px, 0 11px);
    color: #fff;
    font-weight: bold;
    line-height: 12px;
    transform: translateX(-50%);
  }

  .marker.left {
    background: #b00808;
  }

  .marker.ref {
    background: #2460a4;
  }

  .marker.right {
    background: #087808;
  }

  .cursor-time {
    top: 2px;
    padding-left: 2px;
  }

  .y-zoom,
  .x-zoom {
    position: absolute;
    display: flex;
    background: rgb(28 28 30 / 60%);
  }

  .y-zoom {
    top: 0;
    left: 0;
    flex-direction: column;
  }

  .x-zoom {
    right: 2px;
    bottom: 1px;
  }

  .zoom {
    padding: 3px;
  }

  .x-zoom .zoom {
    padding: 3px 4px;
  }

  .zoom svg {
    display: block;
    width: 12px;
    height: 12px;
  }

  .units {
    position: absolute;
    top: 38px;
    left: 0;
    width: 60px;
  }

  .units select {
    display: block;
    appearance: none;
    width: 100%;
    height: 19px;
    padding-left: 6px;
    border-radius: 3px;
    background: #545454;
  }

  .units::after {
    content: '';
    position: absolute;
    top: 8px;
    right: 5px;
    border: solid transparent;
    border-width: 4px 4px 0;
    border-top-color: #e0e0e0;
    pointer-events: none;
  }

  .options {
    position: absolute;
    top: 2px;
    right: 4px;
    display: grid;
    grid-template-columns: 1fr 130px;
    grid-template-rows: repeat(7, 18px);
    align-content: space-between;
    column-gap: 8px;
    width: 305px;
    height: 169px;
    padding: 6px 3px 6px 4px;
    border: 2px solid #4a4a4c;
    border-radius: 8px;
    background: rgb(38 38 40 / 93%);
  }

  .options > label {
    display: flex;
    align-items: center;
    gap: 5px;
    white-space: nowrap;
  }

  .options > button {
    border-radius: 2px;
    background: linear-gradient(#585858, #464646);
    white-space: nowrap;
  }

  input[type='checkbox'] {
    appearance: none;
    flex: none;
    width: 12px;
    height: 12px;
    border: 1px solid #4c4c4c;
    border-radius: 3px;
    background: #2a2a2a;
  }

  input[type='checkbox']:checked {
    border-color: #777;
  }

  input[type='checkbox']:checked::after {
    content: '';
    display: block;
    width: 4px;
    height: 8px;
    margin: -1px 0 0 3px;
    border: solid #e0e0e0;
    border-width: 0 2px 2px 0;
    transform: rotate(40deg);
  }

  input[type='checkbox']:disabled {
    opacity: 0.6;
  }

  .etc,
  .spinner {
    display: flex;
    align-items: center;
    justify-content: space-between;
  }

  .etc {
    margin-left: -2px;
    white-space: nowrap;
  }

  .spinner {
    width: 61px;
    height: 18px;
    border: 1px solid #333;
    border-radius: 3px;
    background: #262628;
  }

  .spinner input {
    width: 42px;
    padding-right: 4px;
    text-align: right;
  }

  .steps {
    display: flex;
    flex-direction: column;
    align-items: center;
    justify-content: center;
    gap: 2px;
    align-self: stretch;
    width: 17px;
    background: #444;
  }

  .x-axis {
    position: relative;
    grid-column: 3;
  }

  .x-axis .tick {
    top: 2px;
    transform: translateX(-50%);
  }

  .ir-x {
    border-left: 1px solid #333;
    border-bottom: 1px solid #3a3a3a;
    background: #0f0f0f;
  }

  .navigator {
    position: relative;
    grid-column: 3;
    border-left: 1px solid #333;
    border-bottom: 1px solid #303030;
    background: #0f0f0f;
  }

  .gap {
    grid-column: 3;
    border-left: 1px solid #333;
    background: #0f0f0f;
  }

  /* Legend */
  .legend {
    display: grid;
    grid-template-columns: repeat(5, 1fr);
    grid-auto-rows: 14px;
    row-gap: 3px;
    flex: none;
    margin: 3px 122px 2px 147px;
    height: 39px;
    padding: 2px 0 0 5px;
    border: solid #5a5a5a;
    border-width: 2px 0 2px 1px;
    background: #0f0f0f;
  }

  .legend label {
    display: flex;
    align-items: center;
    padding-right: 30px;
  }

  .legend-name {
    flex: 1;
    padding-left: 6px;
  }

  .swatch {
    width: 42px;
    height: 2px;
    background: currentColor;
  }

  .blank {
    visibility: hidden;
  }

  .value {
    width: 71px;
    text-align: right;
  }

  .bold {
    font-weight: bold;
  }

  /* Status bar */
  .status {
    display: flex;
    flex: none;
    height: 21px;
    border-top: 1px solid #333;
    line-height: 20px;
    white-space: nowrap;
  }

  .status > span {
    flex: none;
    padding: 0 3px;
    border-right: 1px solid #2e2e2e;
  }

  .status .memory {
    width: 70px;
    padding-left: 2px;
  }

  .status .bits {
    display: flex;
    justify-content: space-between;
    width: 222px;
    color: #4a78c4;
  }

  .bits i {
    font-style: normal;
  }

  .status .peak {
    margin-left: 7px;
    border-left: 1px solid #2e2e2e;
  }

  .status .hint {
    flex: 1;
    text-align: center;
  }

  .status .rest {
    width: 171px;
    border: 0;
  }
</style>
